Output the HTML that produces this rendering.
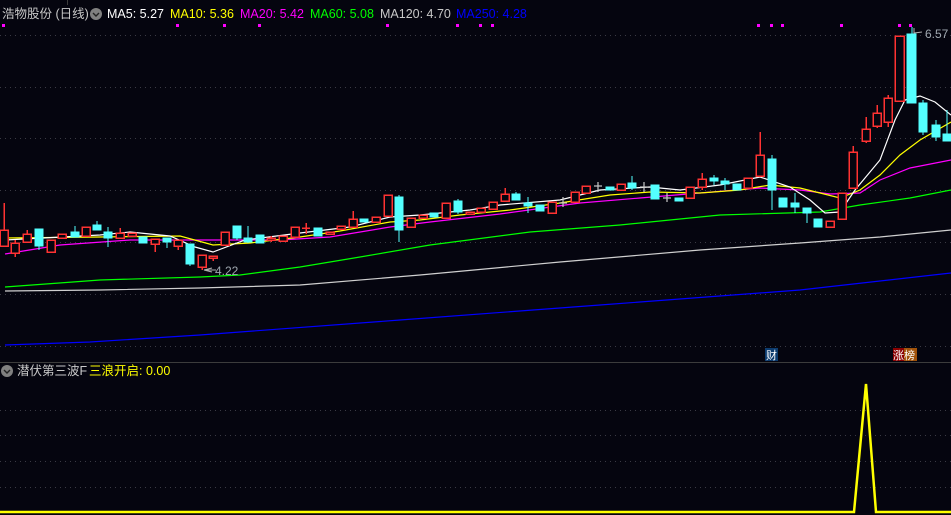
<!DOCTYPE html>
<html><head><meta charset="utf-8"><style>
html,body{margin:0;padding:0;background:#05050f;width:951px;height:515px;overflow:hidden}
svg{display:block}
text{font-family:"Liberation Sans","Noto Sans CJK SC",sans-serif}
</style></head><body>
<svg width="951" height="515" viewBox="0 0 951 515" xmlns="http://www.w3.org/2000/svg">
<rect width="951" height="515" fill="#05050f"/>
<g stroke="#3a3a44" stroke-dasharray="1,4" stroke-width="1">
<line x1="0" y1="35.5" x2="951" y2="35.5"/><line x1="0" y1="87.5" x2="951" y2="87.5"/>
<line x1="0" y1="138.5" x2="951" y2="138.5"/><line x1="0" y1="190.5" x2="951" y2="190.5"/>
<line x1="0" y1="242.5" x2="951" y2="242.5"/><line x1="0" y1="294.5" x2="951" y2="294.5"/>
<line x1="0" y1="346.5" x2="951" y2="346.5"/>
<line x1="0" y1="410.5" x2="951" y2="410.5"/><line x1="0" y1="435.5" x2="951" y2="435.5"/>
<line x1="0" y1="461.5" x2="951" y2="461.5"/><line x1="0" y1="487.5" x2="951" y2="487.5"/>
</g>
<line x1="0" y1="362.5" x2="951" y2="362.5" stroke="#3c3c3c"/>
<line x1="67.5" y1="0" x2="67.5" y2="5" stroke="#3c3c3c"/>

<g fill="#ff00ff">
<rect x="2" y="24" width="3" height="3"/><rect x="176" y="24" width="3" height="3"/><rect x="223" y="24" width="3" height="3"/><rect x="258" y="24" width="3" height="3"/><rect x="386" y="24" width="3" height="3"/><rect x="456" y="24" width="3" height="3"/><rect x="479" y="24" width="3" height="3"/><rect x="491" y="24" width="3" height="3"/><rect x="757" y="24" width="3" height="3"/><rect x="770" y="24" width="3" height="3"/><rect x="781" y="24" width="3" height="3"/><rect x="840" y="24" width="3" height="3"/><rect x="898" y="24" width="3" height="3"/><rect x="909" y="24" width="3" height="3"/>
</g>

<g fill="none" stroke-width="1.2">
<polyline stroke="#0000ff" points="5,345 90,342 200,335 400,320 600,305 800,290 951,273"/>
<polyline stroke="#d0d0d0" points="5,291 100,290 200,288 300,285 420,275 560,262 700,250 800,243 880,237 951,230"/>
<polyline stroke="#00ff00" points="5,287 100,280 200,277 240,275 300,267 360,257 430,245 530,232 620,225 720,215 820,212 860,205 910,198 951,190"/>
<polyline stroke="#ff00ff" points="5,254 60,245 130,240 280,240 330,237 390,227 430,222 500,214 580,203 640,198 700,193 760,188 800,190 830,194 860,193 880,180 910,168 951,160"/>
<polyline stroke="#ffff00" points="5,238 100,237 180,236 213,245 250,243 300,237 340,231 390,222 420,220 460,215 510,210 560,203 610,195 650,192 700,193 740,190 770,185 800,188 820,193 840,198 860,190 880,175 900,155 920,140 951,122"/>
<polyline stroke="#ffffff" points="5,240 100,235 130,232 170,236 195,247 213,252 245,240 300,233 350,227 390,217 420,215 470,210 500,205 560,200 600,190 650,187 680,190 720,185 760,177 790,187 810,200 825,213 840,212 855,190 880,160 895,120 905,100 920,96 935,102 951,115"/>
</g>

<g stroke="#ff3232" fill="#05050f" stroke-width="1.5" shape-rendering="crispEdges">
<line x1="4" y1="203" x2="4" y2="246"/><rect x="0" y="230" width="8" height="16"/>
<line x1="15" y1="240" x2="15" y2="257"/><rect x="11" y="243" width="8" height="10"/>
<line x1="27" y1="230" x2="27" y2="242"/><rect x="23" y="234" width="8" height="8"/>
<rect x="47" y="240" width="8" height="12"/>
<rect x="58" y="234" width="8" height="4"/>
<rect x="82" y="227" width="8" height="9"/>
<line x1="120" y1="228" x2="120" y2="238"/><rect x="116" y="233" width="8" height="5"/>
<rect x="128" y="233" width="8" height="3"/>
<line x1="155" y1="239" x2="155" y2="252"/><rect x="151" y="239" width="8" height="5"/>
<line x1="178" y1="240" x2="178" y2="250"/><rect x="174" y="240" width="8" height="6"/>
<line x1="202" y1="255" x2="202" y2="270"/><rect x="198" y="255" width="8" height="12"/>
<line x1="213" y1="256" x2="213" y2="261"/><rect x="209" y="256" width="8" height="2"/>
<rect x="221" y="232" width="8" height="13"/>
<line x1="271" y1="236" x2="271" y2="242"/><rect x="267" y="238" width="8" height="2"/>
<rect x="279" y="236" width="8" height="5"/>
<rect x="291" y="227" width="8" height="10"/>
<line x1="306" y1="223" x2="306" y2="234"/><line x1="302" y1="228" x2="310" y2="228"/>
<rect x="326" y="232" width="8" height="2"/>
<rect x="337" y="226" width="8" height="3"/>
<line x1="353" y1="211" x2="353" y2="227"/><rect x="349" y="219" width="8" height="8"/>
<rect x="372" y="217" width="8" height="5"/>
<rect x="384" y="195" width="8" height="21"/>
<rect x="407" y="218" width="8" height="9"/>
<rect x="419" y="215" width="8" height="3"/>
<rect x="442" y="203" width="8" height="15"/>
<rect x="466" y="212" width="8" height="2"/>
<rect x="477" y="208" width="8" height="4"/>
<rect x="489" y="202" width="8" height="7"/>
<line x1="505" y1="188" x2="505" y2="201"/><rect x="501" y="194" width="8" height="7"/>
<rect x="548" y="202" width="8" height="11"/>
<rect x="571" y="192" width="8" height="10"/>
<rect x="582" y="186" width="8" height="7"/>
<rect x="617" y="184" width="8" height="6"/>
<rect x="686" y="187" width="8" height="11"/>
<line x1="702" y1="173" x2="702" y2="190"/><rect x="698" y="179" width="8" height="8"/>
<rect x="744" y="178" width="8" height="10"/>
<line x1="760" y1="132" x2="760" y2="176"/><rect x="756" y="155" width="8" height="21"/>
<rect x="826" y="221" width="8" height="6"/>
<rect x="838" y="193" width="8" height="26"/>
<line x1="853" y1="146" x2="853" y2="188"/><rect x="849" y="152" width="8" height="36"/>
<line x1="866" y1="117" x2="866" y2="143"/><rect x="862" y="129" width="8" height="12"/>
<line x1="877" y1="105" x2="877" y2="128"/><rect x="873" y="113" width="8" height="13"/>
<line x1="888" y1="95" x2="888" y2="127"/><rect x="884" y="98" width="8" height="24"/>
<rect x="895" y="36" width="9" height="65"/>
</g>
<g stroke="#54ffff" fill="#54ffff" stroke-width="1.2" shape-rendering="crispEdges">
<line x1="39" y1="229" x2="39" y2="250"/><rect x="35" y="229" width="8" height="17"/>
<line x1="75" y1="226" x2="75" y2="237"/><rect x="71" y="232" width="8" height="5"/>
<line x1="97" y1="221" x2="97" y2="230"/><rect x="93" y="225" width="8" height="5"/>
<line x1="108" y1="227" x2="108" y2="247"/><rect x="104" y="232" width="8" height="6"/>
<rect x="139" y="237" width="8" height="6"/>
<line x1="167" y1="238" x2="167" y2="248"/><rect x="163" y="238" width="8" height="4"/>
<line x1="190" y1="244" x2="190" y2="266"/><rect x="186" y="244" width="8" height="20"/>
<line x1="237" y1="226" x2="237" y2="240"/><rect x="233" y="226" width="8" height="12"/>
<line x1="248" y1="226" x2="248" y2="243"/><rect x="244" y="238" width="8" height="4"/>
<rect x="256" y="235" width="8" height="8"/>
<rect x="314" y="228" width="8" height="8"/>
<rect x="360" y="219" width="8" height="3"/>
<line x1="399" y1="195" x2="399" y2="242"/><rect x="395" y="197" width="8" height="33"/>
<rect x="430" y="213" width="8" height="4"/>
<line x1="458" y1="199" x2="458" y2="214"/><rect x="454" y="201" width="8" height="11"/>
<line x1="516" y1="192" x2="516" y2="200"/><rect x="512" y="194" width="8" height="6"/>
<line x1="528" y1="197" x2="528" y2="213"/><rect x="524" y="203" width="8" height="3"/>
<rect x="536" y="205" width="8" height="6"/>
<rect x="606" y="187" width="8" height="3"/>
<line x1="632" y1="176" x2="632" y2="190"/><rect x="628" y="183" width="8" height="5"/>
<rect x="651" y="185" width="8" height="14"/>
<rect x="675" y="198" width="8" height="3"/>
<line x1="714" y1="175" x2="714" y2="185"/><rect x="710" y="178" width="8" height="3"/>
<line x1="725" y1="178" x2="725" y2="190"/><rect x="721" y="181" width="8" height="3"/>
<rect x="733" y="184" width="8" height="6"/>
<line x1="772" y1="155" x2="772" y2="210"/><rect x="768" y="159" width="8" height="31"/>
<rect x="779" y="198" width="8" height="9"/>
<line x1="795" y1="193" x2="795" y2="213"/><rect x="791" y="203" width="8" height="4"/>
<line x1="807" y1="208" x2="807" y2="223"/><rect x="803" y="208" width="8" height="5"/>
<rect x="814" y="219" width="8" height="8"/>
<line x1="912" y1="27" x2="912" y2="103"/><rect x="907" y="34" width="9" height="69"/>
<line x1="923" y1="100" x2="923" y2="135"/><rect x="919" y="103" width="8" height="29"/>
<line x1="936" y1="120" x2="936" y2="141"/><rect x="932" y="125" width="8" height="12"/>
<line x1="947" y1="110" x2="947" y2="141"/><rect x="943" y="134" width="8" height="7"/>
</g>
<g stroke="#c8c8c8" stroke-width="1.2">
<line x1="563" y1="197" x2="563" y2="207"/><line x1="559" y1="203" x2="567" y2="203"/>
<line x1="598" y1="182" x2="598" y2="192"/><line x1="594" y1="186" x2="602" y2="186"/>
<line x1="644" y1="182" x2="644" y2="192"/><line x1="640" y1="187" x2="648" y2="187"/>
<line x1="667" y1="193" x2="667" y2="202"/><line x1="663" y1="198" x2="671" y2="198"/>
</g>

<polyline points="212,268 204,270 212,272" fill="none" stroke="#b0b0b0"/>
<line x1="204" y1="270" x2="216" y2="270" stroke="#b0b0b0"/>
<text x="215" y="275" font-size="12" fill="#a0a8b0">4.22</text>
<polyline points="914,28 914,33 922,32" fill="none" stroke="#b0b0b0"/>
<text x="925" y="38" font-size="12" fill="#a0a8b0">6.57</text>

<text x="2" y="18" font-size="12.5" fill="#c8c8c8">浩物股份 (日线)</text>
<circle cx="96" cy="14" r="6" fill="#808080"/><polyline points="93,13 96,16 99,13" fill="none" stroke="#222" stroke-width="1.4"/>
<text x="107" y="18" font-size="12.5" fill="#ffffff">MA5: 5.27</text>
<text x="170" y="18" font-size="12.5" fill="#ffff00">MA10: 5.36</text>
<text x="240" y="18" font-size="12.5" fill="#ff00ff">MA20: 5.42</text>
<text x="310" y="18" font-size="12.5" fill="#00ff00">MA60: 5.08</text>
<text x="380" y="18" font-size="12.5" fill="#c8c8c8">MA120: 4.70</text>
<text x="456" y="18" font-size="12.5" fill="#0000ff">MA250: 4.28</text>

<rect x="765" y="348" width="13" height="13" fill="#0c3b6e"/>
<text x="766" y="359" font-size="11" fill="#ffffff">财</text>
<rect x="893" y="348" width="11" height="13" fill="#8a0000"/>
<rect x="904" y="348" width="13" height="13" fill="#a0520a"/>
<text x="893" y="359" font-size="11" fill="#ffffff">涨榜</text>

<circle cx="7" cy="371" r="6" fill="#808080"/><polyline points="4,370 7,373 10,370" fill="none" stroke="#222" stroke-width="1.4"/>
<text x="17" y="375" font-size="12.5" fill="#c8c8c8">潜伏第三波F</text>
<text x="89" y="375" font-size="12.5" fill="#ffff00">三浪开启: 0.00</text>
<polyline points="0,512 854,512 866,384 876,512 951,512" fill="none" stroke="#ffff00" stroke-width="2.5"/>
</svg>
</body></html>
